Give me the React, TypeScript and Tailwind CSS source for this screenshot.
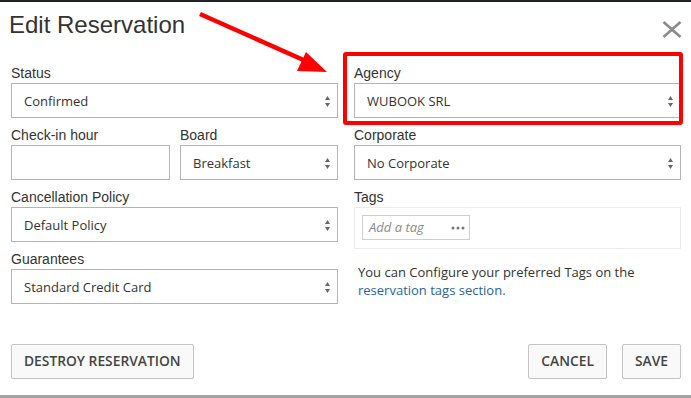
import React from "react";

const sans = "font-['Liberation_Sans',Arial,sans-serif]";
const open = "font-['Open_Sans',sans-serif]";

function Arrows() {
  return (
    <svg width="5" height="11" viewBox="0 0 5 11" className="shrink-0">
      <polygon points="0,4 5,4 2.5,0" fill="#666" />
      <polygon points="0,7 5,7 2.5,11" fill="#666" />
    </svg>
  );
}

function Label({ children }: { children: React.ReactNode }) {
  return <div className={`${sans} text-[14px] leading-[19px] pt-[1px] text-[#333]`}>{children}</div>;
}

function Select({ value }: { value: string }) {
  return (
    <div className={`${open} h-[35px] border border-[#b4b4b4] flex items-center justify-between pl-[12px] pr-[7px] pt-[2px] text-[13px] text-[#333]`}>
      <span>{value}</span>
      <Arrows />
    </div>
  );
}

function Field({ label, value, last }: { label: string; value: string; last?: boolean }) {
  return (
    <div className={last ? "" : "mb-[7px]"}>
      <Label>{label}</Label>
      <Select value={value} />
    </div>
  );
}

function Button({ children }: { children: React.ReactNode }) {
  return (
    <button className={`${open} h-[35px] px-[12px] bg-[#f9f9f9] border border-[#c4c4c4] rounded-[2px] text-[13.8px] font-semibold text-[#444] uppercase`}>
      {children}
    </button>
  );
}

export default function App() {
  return (
    <div className="relative w-[691px] h-[398px] bg-white overflow-hidden flex flex-col">
      <div className="h-[2px] bg-[#1f242c]" />

      <div className="h-[61px] flex justify-between pl-[9px] pr-[9px]">
        <h2 className={`${sans} mt-[10px] text-[24px] leading-[26px] text-[#333]`}>Edit Reservation</h2>
        <svg width="20" height="17" viewBox="0 0 20 17" className="mt-[19px]">
          <line x1="1.5" y1="1" x2="18.5" y2="16" stroke="#8a8a8a" strokeWidth="2.6" />
          <line x1="18.5" y1="1" x2="1.5" y2="16" stroke="#8a8a8a" strokeWidth="2.6" />
        </svg>
      </div>

      <div className="grid grid-cols-2 gap-x-[16px] pl-[11px] pr-[10px]">
        <div>
          <Field label="Status" value="Confirmed" />
          <div className="flex gap-[10px] mb-[7px]">
            <div className="w-[159px]">
              <Label>Check-in hour</Label>
              <div className="h-[35px] border border-[#b4b4b4]" />
            </div>
            <div className="flex-1">
              <Label>Board</Label>
              <Select value="Breakfast" />
            </div>
          </div>
          <Field label="Cancellation Policy" value="Default Policy" />
          <Field label="Guarantees" value="Standard Credit Card" last />
        </div>

        <div>
          <Field label="Agency" value="WUBOOK SRL" />
          <Field label="Corporate" value="No Corporate" />
          <Label>Tags</Label>
          <div className="h-[42px] border border-[#ebebeb] p-[7px]">
            <div className={`${open} w-[108px] h-[25px] border border-[#cfcfcf] flex items-center justify-between pl-[6px] pr-[4px]`}>
              <span className="text-[13px] italic text-[#8a8a8a]">Add a tag</span>
              <svg width="14" height="4" viewBox="0 0 14 4">
                <circle cx="2" cy="2" r="1.5" fill="#777" />
                <circle cx="7" cy="2" r="1.5" fill="#777" />
                <circle cx="12" cy="2" r="1.5" fill="#777" />
              </svg>
            </div>
          </div>
          <p className={`${open} mt-[14px] pl-[4px] text-[13px] leading-[18px] text-[#333]`}>
            You can Configure your preferred Tags on the
            <br />
            <a className="text-[#2a6496]">reservation tags section.</a>
          </p>
        </div>
      </div>

      <div className="mt-[40px] flex justify-between pl-[11px] pr-[10px]">
        <Button>Destroy Reservation</Button>
        <div className="flex gap-[15px]">
          <Button>Cancel</Button>
          <Button>Save</Button>
        </div>
      </div>

      <div className="mt-auto h-[3px] bg-[#a3a3a3]" />

      {/* annotation overlay */}
      <div className="absolute left-[343px] top-[52px] w-[340px] h-[73px] border-[4px] border-[#ff0000] rounded-[3px] pointer-events-none" />
      <svg className="absolute left-0 top-0 pointer-events-none" width="691" height="398">
        <line x1="200" y1="14" x2="308" y2="62" stroke="#ff0000" strokeWidth="4.5" />
        <polygon points="327,72 306,52 297,71" fill="#ff0000" />
      </svg>
    </div>
  );
}
